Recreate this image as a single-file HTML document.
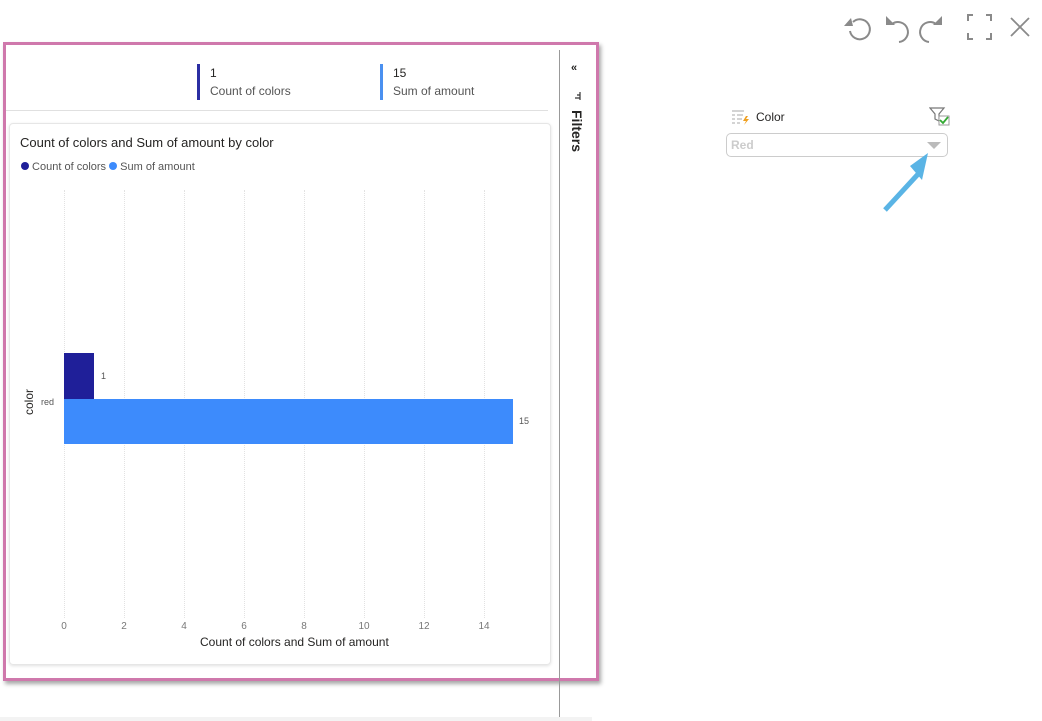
<!DOCTYPE html>
<html><head><style>
body{margin:0;width:1042px;height:721px;background:#fff;position:relative;overflow:hidden;font-family:"Liberation Sans",sans-serif;color:#252423}
.a{position:absolute}
.g{position:absolute;top:190px;height:428px;border-left:1px dotted #e2e2e2;width:0}
.t{position:absolute;top:621px;font-size:10px;color:#777;width:20px;text-align:center}
</style></head><body>
<div class="a" style="left:3px;top:42px;width:590px;height:633px;border:3px solid #cf78ac;box-shadow:2px 3px 4px rgba(0,0,0,.35)"></div>
<div class="a" style="left:559px;top:50px;width:1px;height:668px;background:#999"></div>
<div class="a" style="left:0;top:717px;width:592px;height:4px;background:#f3f3f3"></div>
<div class="a" style="left:6px;top:110px;width:542px;height:1px;background:#e0e0e0"></div>
<div class="a" style="left:197px;top:64px;width:3px;height:36px;background:#2b2ea3"></div>
<div class="a" style="left:210px;top:66px;font-size:12px">1</div>
<div class="a" style="left:210px;top:84px;font-size:12px;color:#555">Count of colors</div>
<div class="a" style="left:380px;top:64px;width:3px;height:36px;background:#4a90f0"></div>
<div class="a" style="left:393px;top:66px;font-size:12px">15</div>
<div class="a" style="left:393px;top:84px;font-size:12px;color:#555">Sum of amount</div>
<div class="a" style="left:571px;top:62px;font-size:11px;font-weight:bold">«</div>
<svg class="a" style="left:574px;top:91px" width="10" height="10"><path d="M6 1v8M3 4h3M1 7h5" stroke="#333" stroke-width="1.2"/></svg>
<div class="a" style="top:110px;font-size:14px;font-weight:bold;transform:rotate(90deg);transform-origin:0 0;left:585px">Filters</div>
<div class="a" style="left:9px;top:123px;width:540px;height:540px;border:1px solid #e6e6e6;border-radius:4px;box-shadow:0 1px 3px rgba(0,0,0,.12)"></div>
<div class="a" style="left:20px;top:135px;font-size:13px">Count of colors and Sum of amount by color</div>
<div class="a" style="left:21px;top:161px;font-size:11px;color:#555"><span style="display:inline-block;width:8px;height:8px;border-radius:50%;background:#1f1f99"></span> Count of colors <span style="display:inline-block;width:8px;height:8px;border-radius:50%;background:#3d8bfc"></span> Sum of amount</div>
<div class="g" style="left:64px"></div><div class="g" style="left:124px"></div><div class="g" style="left:184px"></div><div class="g" style="left:244px"></div><div class="g" style="left:304px"></div><div class="g" style="left:364px"></div><div class="g" style="left:424px"></div><div class="g" style="left:484px"></div>
<div class="t" style="left:54px">0</div><div class="t" style="left:114px">2</div><div class="t" style="left:174px">4</div><div class="t" style="left:234px">6</div><div class="t" style="left:294px">8</div><div class="t" style="left:354px">10</div><div class="t" style="left:414px">12</div><div class="t" style="left:474px">14</div>
<div class="a" style="left:64px;top:353px;width:30px;height:46px;background:#1f1f99"></div>
<div class="a" style="left:64px;top:399px;width:449px;height:45px;background:#3d8bfc"></div>
<div class="a" style="left:101px;top:371px;font-size:9px;color:#555">1</div>
<div class="a" style="left:519px;top:416px;font-size:9px;color:#555">15</div>
<div class="a" style="left:41px;top:397px;font-size:9px;color:#555">red</div>
<div class="a" style="left:22px;top:415px;font-size:12px;transform:rotate(-90deg);transform-origin:0 0">color</div>
<div class="a" style="left:200px;top:635px;font-size:12px">Count of colors and Sum of amount</div>
<svg class="a" style="left:840px;top:10px" width="200" height="34" fill="none" stroke="#8a8a8a" stroke-width="2">
<path d="M10 21a10 10 0 1 0 3-9"/><path d="M4 16h9l-2-8z" fill="#8a8a8a" stroke="none"/>
<path d="M52 14a10 10 0 1 1 7 18"/><path d="M46 6v9h9z" fill="#8a8a8a" stroke="none"/>
<path d="M96 14a10 10 0 1 0-7 18"/><path d="M102 6v9h-9z" fill="#8a8a8a" stroke="none"/>
<path d="M128 11V5h5M146 5h5v6M151 23v6h-5M133 29h-5v-6"/>
<path d="M171 8l18 18M189 8l-18 18" stroke-width="1.8"/>
</svg>
<svg class="a" style="left:731px;top:109px" width="20" height="16"><path d="M1 2h12M1 6h3M6 6h6M1 10h3M6 10h5M1 14h3M6 14h3" stroke="#bbb" stroke-width="1.2"/><path d="M15 7l-3 5h3l-2 4 5-6h-3l2-3z" fill="#f0a020"/></svg>
<div class="a" style="left:756px;top:110px;font-size:12px">Color</div>
<svg class="a" style="left:929px;top:106px" width="22" height="20"><path d="M1 2h14l-5 6v7l-4-2V8z" fill="none" stroke="#777" stroke-width="1.2"/><rect x="10" y="10" width="10" height="9" fill="#fff" stroke="#999"/><path d="M11 14l3 3 5-6" stroke="#3a3" stroke-width="1.8" fill="none"/></svg>
<div class="a" style="left:726px;top:133px;width:220px;height:22px;border:1px solid #ccc;border-radius:5px"></div>
<div class="a" style="left:731px;top:138px;font-size:12px;font-weight:bold;color:#ccc">Red</div>
<div class="a" style="left:927px;top:142px;width:0;height:0;border-left:7px solid transparent;border-right:7px solid transparent;border-top:7px solid #bbb"></div>
<svg class="a" style="left:880px;top:150px" width="60" height="65"><path d="M5 60L40 22" stroke="#5ab4e5" stroke-width="5"/><path d="M30 16L48 3 42 30z" fill="#5ab4e5"/></svg>
</body></html>
